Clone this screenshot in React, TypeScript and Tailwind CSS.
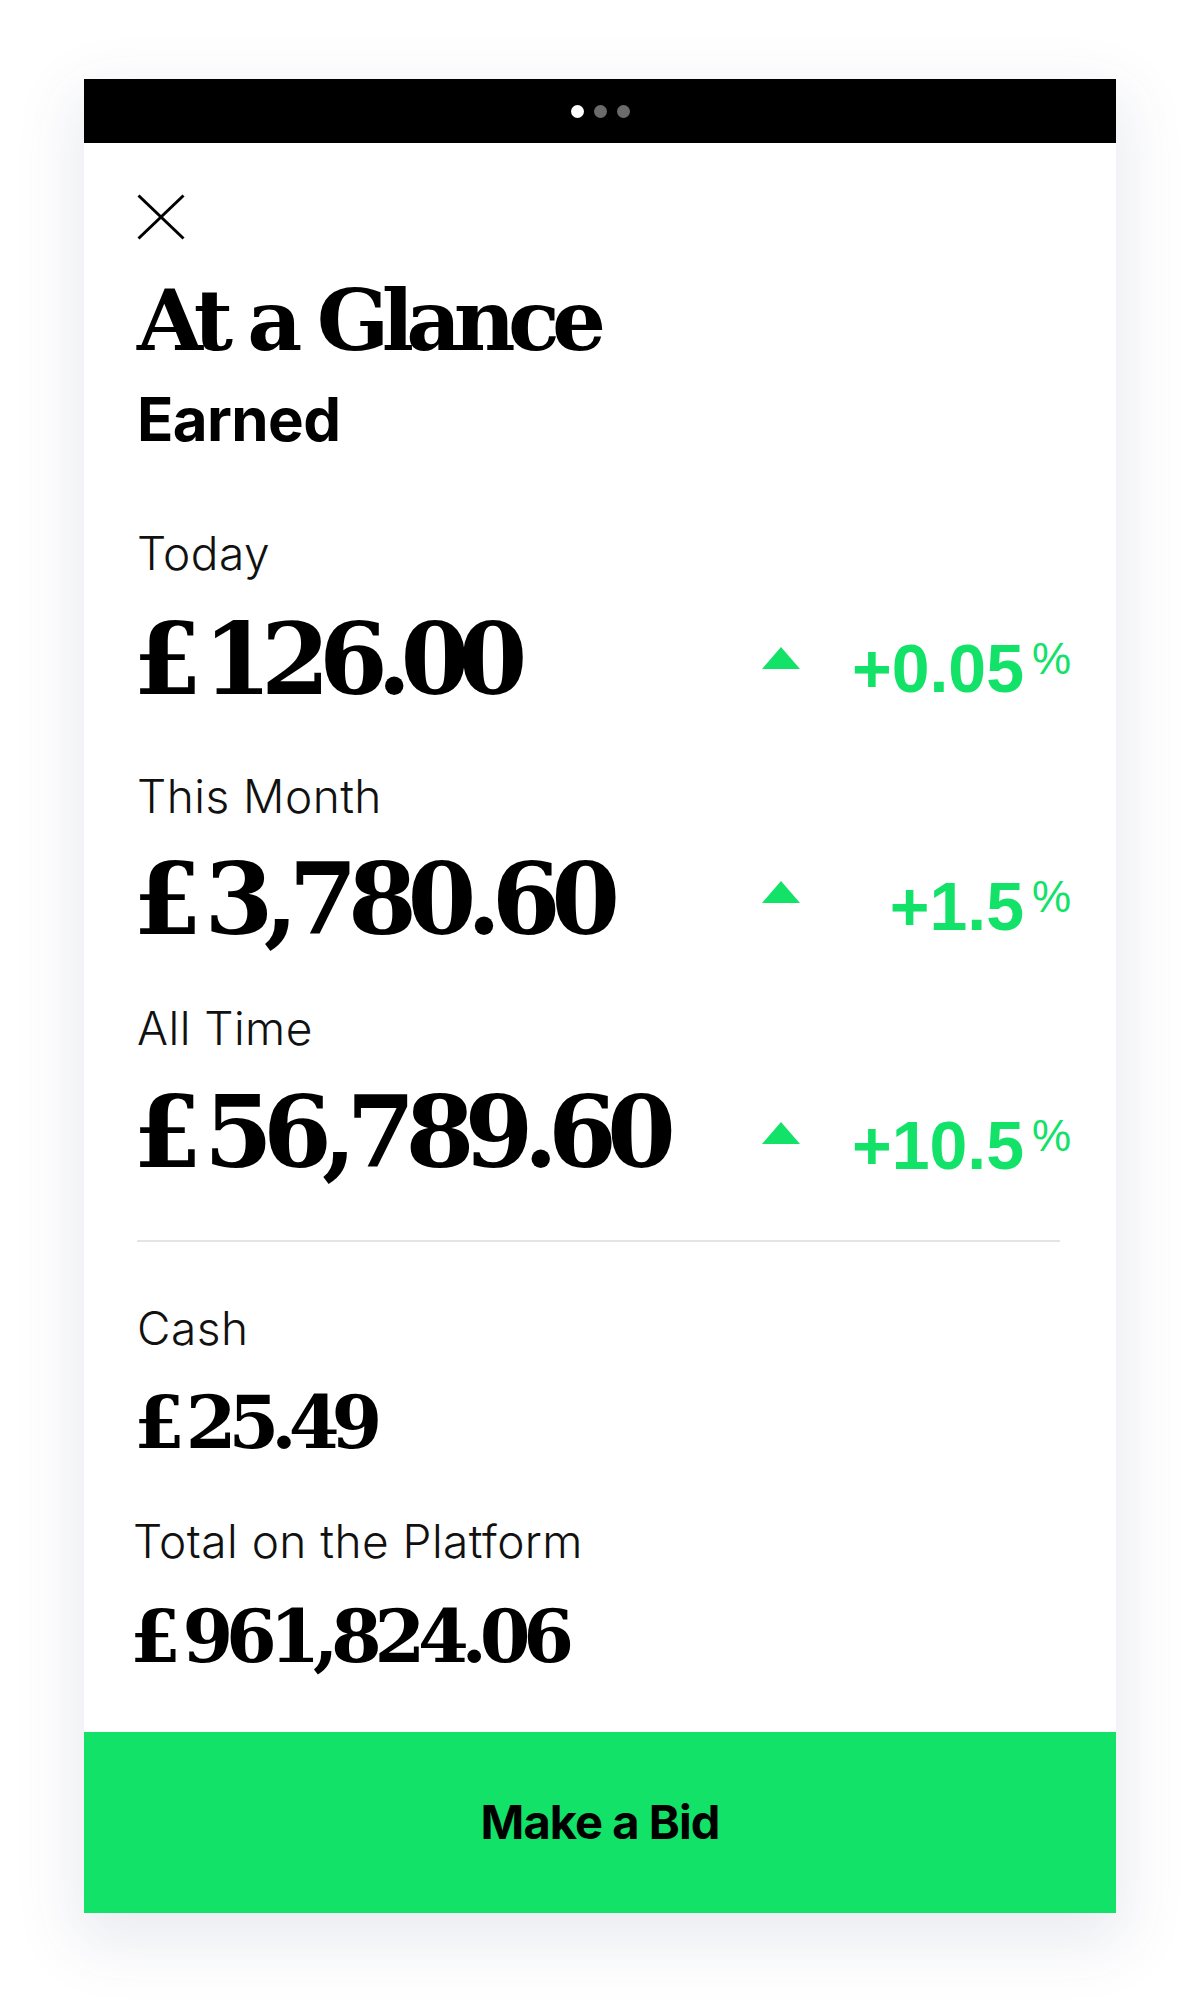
import React from "react";

const serif = "font-['DejaVu_Serif',serif] font-bold text-black";
const label = "font-['Inter',sans-serif] font-light text-[46px] leading-none tracking-[0.01em] text-[#111]";
const pct = "font-['Liberation_Sans',Arial,sans-serif] font-bold text-[#12e268]";

function Triangle({ cls }: { cls: string }) {
  return (
    <svg className={cls} width="38" height="22" viewBox="0 0 38 22">
      <polygon points="19,0 38,22 0,22" fill="#12e268" />
    </svg>
  );
}

function Change({ value, groupCls, triCls }: { value: string; groupCls: string; triCls: string }) {
  return (
    <div className={groupCls}>
      <Triangle cls={triCls} />
      <span className={`${pct} block w-[224px] text-right text-[68px] leading-none`}>{value}</span>
      <span className="ml-[8px] mt-[3px] block font-['Liberation_Sans',Arial,sans-serif] text-[44px] font-normal leading-none text-[#12e268]">
        %
      </span>
    </div>
  );
}

function Big({ value, track }: { value: string; track: string }) {
  return (
    <div className={`${serif} ${track} -ml-[4px] w-[629px] shrink-0 whitespace-nowrap text-[99px] leading-none`}>
      <span className="mr-[12px]">£</span>
      {value}
    </div>
  );
}

export default function App() {
  return (
    <div className="min-h-[2002px] bg-white pt-[79px]">
      <div className="mx-auto flex h-[1834px] w-[1032px] flex-col bg-white shadow-[0_22px_60px_8px_rgba(60,72,130,0.11)]">
        <div className="flex h-16 items-center justify-center gap-[10px] bg-black">
          <span className="block h-[13px] w-[13px] rounded-full bg-white" />
          <span className="block h-[13px] w-[13px] rounded-full bg-[#6b6b6b]" />
          <span className="block h-[13px] w-[13px] rounded-full bg-[#6b6b6b]" />
        </div>

        <div className="flex-1 px-[53px]">
          <svg className="mt-[51px] block" width="48" height="46" viewBox="0 0 48 46">
            <line x1="1.5" y1="1.5" x2="46.5" y2="44.5" stroke="#000" strokeWidth="3" />
            <line x1="46.5" y1="1.5" x2="1.5" y2="44.5" stroke="#000" strokeWidth="3" />
          </svg>

          <h1 className={`${serif} mt-[38px] text-[85px] leading-none tracking-[-0.09em]`}>At a Glance</h1>
          <h2 className="mt-[26px] font-['Inter',sans-serif] text-[60px] font-bold leading-none tracking-[-0.01em] text-black">
            Earned
          </h2>

          {/* Today */}
          <div className={`${label} mt-[81px]`}>Today</div>
          <div className="mt-[34px] flex items-start">
            <Big value="126.00" track="tracking-[-0.11em]" />
            <Change value="+0.05" groupCls="mt-[24px] flex items-start" triCls="mt-[13px] block shrink-0" />
          </div>

          {/* This Month */}
          <div className={`${label} mt-[64px]`}>This Month</div>
          <div className="mt-[31px] flex items-start">
            <Big value="3,780.60" track="tracking-[-0.096em]" />
            <Change value="+1.5" groupCls="mt-[22px] flex items-start" triCls="mt-[9px] block shrink-0" />
          </div>

          {/* All Time */}
          <div className={`${label} mt-[56px]`}>All Time</div>
          <div className="mt-[32px] flex items-start">
            <Big value="56,789.60" track="tracking-[-0.1em]" />
            <Change value="+10.5" groupCls="mt-[28px] flex items-start" triCls="mt-[11px] block shrink-0" />
          </div>

          <div className="mr-[3px] mt-[58px] h-[2px] bg-[#e4e4e4]" />

          <div className={`${label} mt-[63px]`}>Cash</div>
          <div className={`${serif} -ml-[3px] mt-[35px] whitespace-nowrap text-[73px] leading-none tracking-[-0.11em]`}>
            <span className="mr-[9px]">£</span>25.49
          </div>

          <div className={`${label} -ml-1 mt-[59px]`}>Total on the Platform</div>
          <div className={`${serif} -ml-[7px] mt-[36px] whitespace-nowrap text-[73px] leading-none tracking-[-0.1em]`}>
            <span className="mr-[9px]">£</span>961,824.06
          </div>
        </div>

        <button className="flex h-[181px] w-full items-center justify-center bg-[#12e268] font-['Inter',sans-serif] text-[47px] font-bold tracking-[-0.02em] text-black">
          Make a Bid
        </button>
      </div>
    </div>
  );
}
